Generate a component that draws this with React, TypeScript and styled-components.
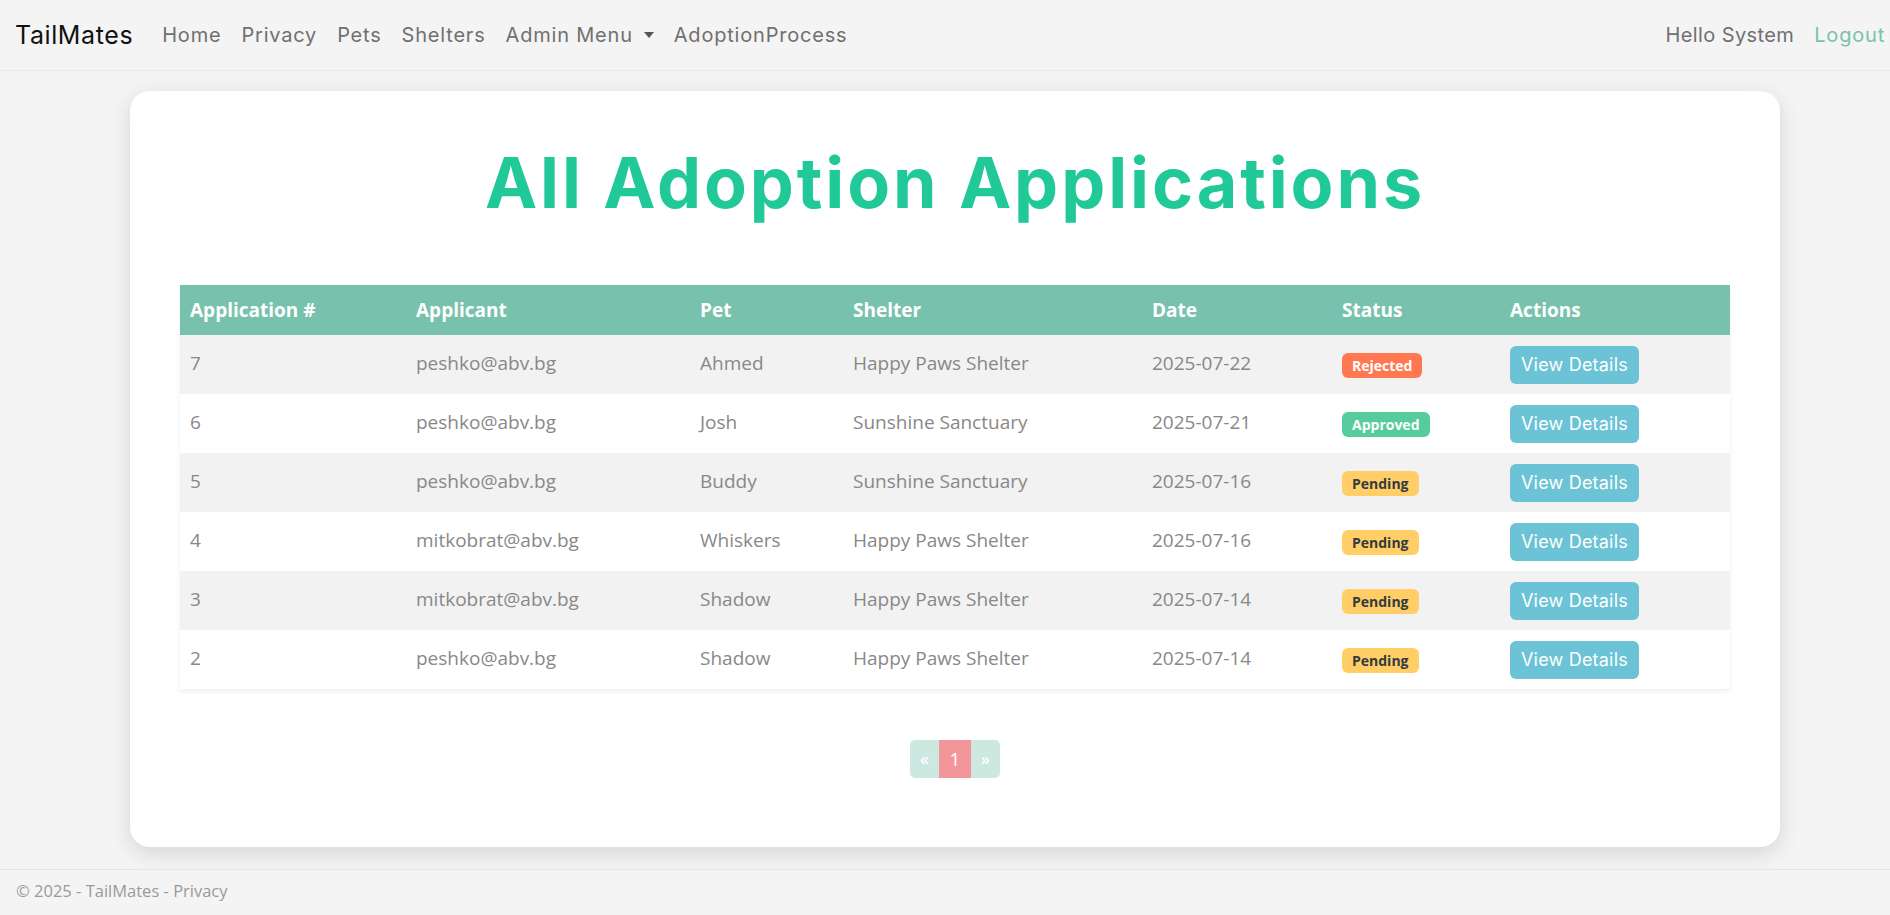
import React from "react";
import styled, { createGlobalStyle } from "styled-components";

const GlobalStyle = createGlobalStyle`
  html, body {
    margin: 0;
    padding: 0;
    background: #f4f4f4;
    font-family: "Open Sans", "Noto Sans", sans-serif;
    color: #888;
  }
  * {
    box-sizing: border-box;
  }
`;

const Page = styled.div`
  display: flex;
  flex-direction: column;
  min-height: 100vh;
`;

const Navbar = styled.nav`
  height: 71px;
  display: flex;
  align-items: center;
  padding: 0 0 0 15px;
  border-bottom: 1px solid #e8e8e8;
  font-family: Inter, "Noto Sans", sans-serif;
`;

const Brand = styled.a`
  font-size: 25px;
  color: #111;
  margin-right: 19px;
  letter-spacing: 0.6px;
  text-decoration: none;
`;

const NavList = styled.div`
  display: flex;
  align-items: center;
`;

const NavLink = styled.a<{ $accent?: boolean }>`
  padding: 0 10px;
  font-size: 20px;
  letter-spacing: 0.8px;
  color: ${(p) => (p.$accent ? "#78c2ad" : "#707070")};
  text-decoration: none;
  display: flex;
  align-items: center;
`;

const Caret = styled.span`
  display: inline-block;
  margin-left: 11px;
  border-top: 6px solid #555;
  border-left: 5px solid transparent;
  border-right: 5px solid transparent;
`;

const RightNav = styled(NavList)`
  margin-left: auto;

  & > :first-child {
    letter-spacing: 0.4px;
  }
  & > :last-child {
    padding-right: 5px;
  }
`;

const Main = styled.main`
  padding: 20px 110px 0 130px;
  margin-bottom: 22px;
`;

const Card = styled.section`
  background: #fff;
  border-radius: 20px;
  box-shadow: 0 6px 22px rgba(0, 0, 0, 0.13);
  padding: 50px 50px 69px;
`;

const Title = styled.h1`
  margin: 0 0 60px;
  text-align: center;
  font-family: Inter, "Noto Sans", sans-serif;
  font-weight: 700;
  font-size: 70px;
  line-height: 1.2;
  letter-spacing: 2.9px;
  color: #21c998;
`;

const Table = styled.table`
  width: 100%;
  border-collapse: collapse;
  table-layout: fixed;
  box-shadow: 0 3px 5px rgba(0, 0, 0, 0.06);
  font-size: 19px;
`;

const HeadRow = styled.tr`
  height: 50px;
  background: #78c2ad;
`;

const Th = styled.th`
  padding: 0 10px;
  text-align: left;
  font-weight: 700;
  color: #fff;
`;

const Row = styled.tr<{ $striped: boolean }>`
  height: 59px;
  background: ${(p) => (p.$striped ? "#f2f2f2" : "#fff")};
`;

const Td = styled.td<{ $text?: boolean }>`
  padding: 0 10px ${(p) => (p.$text ? "4px" : "0")};
  vertical-align: middle;
  color: #888;
  white-space: nowrap;
`;

const badgeColors: Record<string, { bg: string; fg: string }> = {
  Rejected: { bg: "#ff7851", fg: "#fff" },
  Approved: { bg: "#56cc9d", fg: "#fff" },
  Pending: { bg: "#ffce67", fg: "#343a40" },
};

const Badge = styled.span<{ $status: string }>`
  display: inline-block;
  height: 25px;
  line-height: 25px;
  padding: 0 10px;
  border-radius: 6px;
  font-size: 14px;
  font-weight: 700;
  background: ${(p) => badgeColors[p.$status].bg};
  color: ${(p) => badgeColors[p.$status].fg};
`;

const DetailsButton = styled.button`
  height: 38px;
  padding: 0 11px;
  border: none;
  border-radius: 6px;
  background: #6cc3d5;
  color: #fff;
  font-family: Inter, "Noto Sans", sans-serif;
  font-size: 18px;
  letter-spacing: 0.2px;
  cursor: pointer;
`;

const Pagination = styled.ul`
  display: flex;
  justify-content: center;
  margin: 51px 0 0;
  padding: 0;
  list-style: none;
`;

const PageItem = styled.li<{ $active?: boolean }>`
  height: 38px;
  width: ${(p) => (p.$active ? "32px" : "29px")};
  display: flex;
  align-items: center;
  justify-content: center;
  background: ${(p) => (p.$active ? "#f3969a" : "#cce8e0")};
  color: #fff;
  font-size: ${(p) => (p.$active ? "19px" : "16px")};
  font-weight: ${(p) => (p.$active ? 400 : 600)};

  &:first-child {
    border-radius: 5px 0 0 5px;
  }
  &:last-child {
    border-radius: 0 5px 5px 0;
  }
`;

const Footer = styled.footer`
  border-top: 1px solid #e5e5e5;
  padding: 9px 16px 0;
  font-size: 16.5px;
  color: #9a9a9a;
`;

const FooterLink = styled.a`
  color: #9a9a9a;
  text-decoration: none;
`;

const applications = [
  { id: 7, applicant: "peshko@abv.bg", pet: "Ahmed", shelter: "Happy Paws Shelter", date: "2025-07-22", status: "Rejected" },
  { id: 6, applicant: "peshko@abv.bg", pet: "Josh", shelter: "Sunshine Sanctuary", date: "2025-07-21", status: "Approved" },
  { id: 5, applicant: "peshko@abv.bg", pet: "Buddy", shelter: "Sunshine Sanctuary", date: "2025-07-16", status: "Pending" },
  { id: 4, applicant: "mitkobrat@abv.bg", pet: "Whiskers", shelter: "Happy Paws Shelter", date: "2025-07-16", status: "Pending" },
  { id: 3, applicant: "mitkobrat@abv.bg", pet: "Shadow", shelter: "Happy Paws Shelter", date: "2025-07-14", status: "Pending" },
  { id: 2, applicant: "peshko@abv.bg", pet: "Shadow", shelter: "Happy Paws Shelter", date: "2025-07-14", status: "Pending" },
];

const columns = [
  { label: "Application #", width: 226 },
  { label: "Applicant", width: 284 },
  { label: "Pet", width: 153 },
  { label: "Shelter", width: 299 },
  { label: "Date", width: 190 },
  { label: "Status", width: 168 },
  { label: "Actions", width: 230 },
];

export default function App() {
  return (
    <Page>
      <GlobalStyle />
      <Navbar>
        <Brand href="#">TailMates</Brand>
        <NavList>
          <NavLink href="#">Home</NavLink>
          <NavLink href="#">Privacy</NavLink>
          <NavLink href="#">Pets</NavLink>
          <NavLink href="#">Shelters</NavLink>
          <NavLink href="#">
            Admin Menu
            <Caret />
          </NavLink>
          <NavLink href="#">AdoptionProcess</NavLink>
        </NavList>
        <RightNav>
          <NavLink as="span">Hello System</NavLink>
          <NavLink href="#" $accent>
            Logout
          </NavLink>
        </RightNav>
      </Navbar>

      <Main>
        <Card>
          <Title>All Adoption Applications</Title>
          <Table>
            <colgroup>
              {columns.map((c) => (
                <col key={c.label} style={{ width: c.width }} />
              ))}
            </colgroup>
            <thead>
              <HeadRow>
                {columns.map((c) => (
                  <Th key={c.label}>{c.label}</Th>
                ))}
              </HeadRow>
            </thead>
            <tbody>
              {applications.map((a, i) => (
                <Row key={a.id} $striped={i % 2 === 0}>
                  <Td $text>{a.id}</Td>
                  <Td $text>{a.applicant}</Td>
                  <Td $text>{a.pet}</Td>
                  <Td $text>{a.shelter}</Td>
                  <Td $text>{a.date}</Td>
                  <Td>
                    <Badge $status={a.status}>{a.status}</Badge>
                  </Td>
                  <Td>
                    <DetailsButton>View Details</DetailsButton>
                  </Td>
                </Row>
              ))}
            </tbody>
          </Table>
          <Pagination>
            <PageItem>«</PageItem>
            <PageItem $active>1</PageItem>
            <PageItem>»</PageItem>
          </Pagination>
        </Card>
      </Main>

      <Footer>
        © 2025 - TailMates - <FooterLink href="#">Privacy</FooterLink>
      </Footer>
    </Page>
  );
}
